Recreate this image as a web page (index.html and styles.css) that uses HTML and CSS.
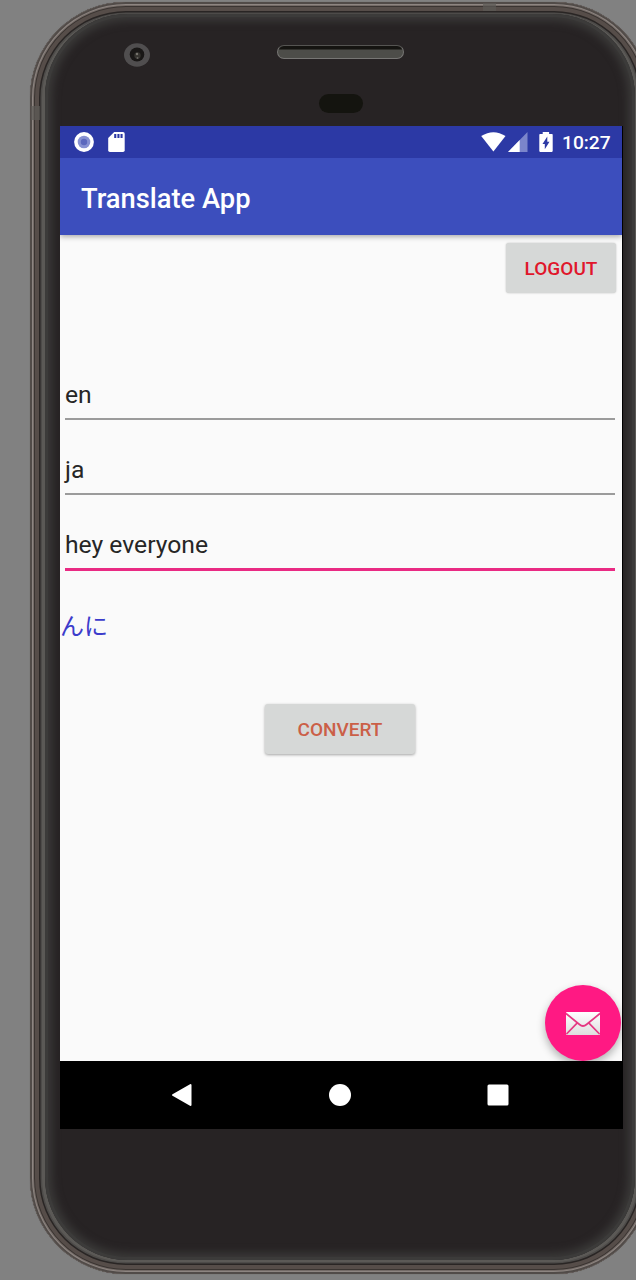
FILE: index.html
```html
<!DOCTYPE html>
<html lang="en">
<head>
<meta charset="utf-8">
<title>Translate App</title>
<link rel="stylesheet" href="styles.css">
</head>
<body>
<div class="phone">
  <i class="antenna antenna-side"></i>
  <i class="antenna antenna-top"></i>
  <div class="face">
    <div class="bezel">
      <svg class="camera" viewBox="0 0 26 24" width="26" height="24">
        <ellipse cx="13" cy="12" rx="13" ry="11.7" fill="#504e4f"/>
        <ellipse cx="13" cy="11.5" rx="7.3" ry="7" fill="#191716"/>
        <circle cx="13.5" cy="12.5" r="3.2" fill="#35332f"/>
        <circle cx="13" cy="11" r="1.2" fill="#77746e"/>
        <circle cx="13.5" cy="15" r="1" fill="#67645f"/>
      </svg>
      <div class="speaker"></div>
      <div class="sensor"></div>
    </div>
    <div class="screen">
      <header class="status">
        <svg width="20" height="20" viewBox="0 0 20 20"><circle cx="10" cy="10" r="9.9" fill="#fff"/><circle cx="10" cy="10" r="6.3" fill="#8791d2"/><circle cx="10" cy="10" r="3.2" fill="#5c68bd"/></svg>
        <svg class="sd" width="17" height="20" viewBox="0 0 17 20"><path fill="#fff" d="M6.2 0H15q1.7 0 1.7 1.8V18.200q0 1.700-1.700 1.700H1.900Q.2 19.900.2 18.200V6z"/><path fill="#2c39a5" d="M6.200 2h2.100v4H6.200zM9.400 2h2.100v4H9.400zM12.500 2h2.100v4h-2.100z"/></svg>
        <span class="spacer"></span>
        <svg class="wifi" width="25" height="20" viewBox="0 0 25 20"><path fill="#fff" d="M.2 4Q12.500-3.600 24.500 4L12.400 19.500z"/></svg>
        <svg class="signal" width="20" height="20" viewBox="0 0 20 20"><path fill="#7b85cb" d="M19.500 0v20H0z"/><path fill="#fff" d="M11.700 8v12H0z"/></svg>
        <svg class="battery" width="14" height="20" viewBox="0 0 14 20"><path fill="#fff" d="M3.700 0h6.400v2H13q.7 0 .7.800v16.300q0 .8-.8.800H1.100q-.8 0-.8-.8V2.800Q.3 2 1.100 2h2.600z"/><path fill="#2c39a5" d="M8.300 4.500v5.300h2.200L5.800 17.200v-5.300H3.500z"/></svg>
        <span class="clock">10:27</span>
      </header>
      <div class="appbar">Translate App</div>
      <main class="content">
        <div class="logout-row"><button class="btn logout">LOGOUT</button></div>
        <div class="field">en</div>
        <div class="field">ja</div>
        <div class="field active">hey everyone</div>
        <div class="result" lang="ja">んに</div>
        <div class="convert-row"><button class="btn convert">CONVERT</button></div>
        <div class="fab-row">
          <button class="fab" aria-label="Mail">
            <svg width="36" height="25" viewBox="0 0 36 25">
              <defs><linearGradient id="paper" x2="0" y2="1"><stop offset="0" stop-color="#fff"/><stop offset="1" stop-color="#dedede"/></linearGradient></defs>
              <rect x="1" y="1" width="34" height="23" rx="1" fill="url(#paper)"/>
              <path d="M1 2.500 14.500 13.500Q18 16.500 21.500 13.500L35 2.500M1.500 23 12.300 11.800M34.500 23 23.700 11.800" fill="none" stroke="#e53882" stroke-width="1.700"/>
            </svg>
          </button>
        </div>
      </main>
      <nav class="navbar">
        <svg width="22" height="24" viewBox="0 0 22 24"><path fill="#fff" stroke="#fff" stroke-width="2" stroke-linejoin="round" d="M2 12 19.500 2v20z"/></svg>
        <svg width="24" height="24" viewBox="0 0 24 24"><circle cx="12" cy="12" r="11" fill="#fff"/></svg>
        <svg width="22" height="22" viewBox="0 0 22 22"><rect x=".5" y=".5" width="21" height="21" rx="1.500" fill="#fff"/></svg>
      </nav>
    </div>
  </div>
</div>
</body>
</html>
```
FILE: styles.css
```css
* { box-sizing: border-box; }
body {
  margin: 0;
  height: 1280px;
  padding: 2px 0 0 30px;
  overflow: hidden;
  background: #818181;
  font-family: Roboto, "Noto Sans CJK JP", sans-serif;
}
.phone {
  position: relative;
  width: 620px;
  height: 1272px;
  padding: 12px 15px 14px;
  border-radius: 96px;
  background: #5b5956;
  box-shadow:
    0 0 1px #5e5956,
    inset 0 0 0 2px #514b48,
    inset 0 0 0 3px #8d8581,
    inset 0 0 0 4px #746b67,
    inset 0 0 0 5px #3a3431,
    inset 0 0 0 9px #564d49,
    inset 0 0 0 10.500px #292524,
    inset 0 0 0 12px #4d4b49;
}
.face {
  height: 1246px;
  border-radius: 83px;
  background: #272324;
  box-shadow: inset 0 0 0 3px #3c3b3a, inset 0 0 9px 7px #3b3a39;
}
.antenna { position: absolute; background: #5c5a57; opacity: .7; }
.antenna-side { left: 1px; top: 104px; width: 9px; height: 14px; }
.antenna-top { left: 453px; top: 1px; width: 13px; height: 8px; }
.bezel {
  height: 112px;
  display: grid;
  grid-template-columns: 79px 153px 44px 40px 1fr;
  grid-template-rows: 29px 24px 27px 19px;
}
.camera { grid-area: 2 / 2; }
.speaker {
  grid-area: 2 / 3 / 3 / 5;
  justify-self: start;
  width: 127px;
  height: 14px;
  margin-top: 2px;
  border: 1.500px solid #777674;
  border-top-color: #555452;
  border-radius: 7px;
  background: linear-gradient(#151411 0 3px, #4d4d49 4px);
}
.sensor { grid-area: 4 / 4; width: 44px; height: 19px; margin-left: -2px; border-radius: 10px; background: #14140f; }
.screen {
  width: 563px;
  height: 1003px;
  margin-left: 15px;
  display: flex;
  flex-direction: column;
  background: #000;
  overflow: hidden;
}
.status { position: relative; z-index: 1; height: 32px; width: 562px; display: flex; align-items: center; padding: 0 11px 0 14px; background: #2c39a5; color: #fff; flex: none; }
.sd { margin-left: 14px; }
.spacer { flex: 1; }
.signal { margin-left: 2px; }
.battery { margin-left: 11px; }
.clock { margin-left: 9px; width: 49px; font-size: 19.200px; font-weight: 500; white-space: nowrap; padding-top: 1px; }
.appbar {
  position: relative;
  width: 562px;
  height: 77px;
  padding: 4px 0 0 21px;
  display: flex;
  align-items: center;
  flex: none;
  background: #3c4ebd;
  color: #fff;
  font-size: 27.300px;
  font-weight: 500;
  box-shadow: 0 1px 6px rgba(0,0,0,.4);
}
.content { width: 562px; height: 826px; flex: none; background: #fafafa; display: flex; flex-direction: column; overflow: hidden; }
.btn {
  border: 0;
  padding: 0;
  height: 50px;
  border-radius: 3px;
  background: #d6d8d7;
  box-shadow: 0 1px 3px rgba(0,0,0,.35);
  font: 500 19px Roboto, sans-serif;
}
.logout-row { height: 134px; padding: 8px 6px 0; display: flex; justify-content: flex-end; align-items: flex-start; }
.logout { width: 110px; color: #e0162b; box-shadow: 0 0 2px rgba(0,0,0,.25); }
.convert { width: 150px; color: #cb5f47; }
.field {
  height: 51px;
  margin: 0 7px 24px 5px;
  border-bottom: 2px solid #9b9b9b;
  line-height: 51px;
  font-size: 24.700px;
  color: #262626;
}
.field.active { height: 52px; border-bottom: 3px solid #e92a83; margin-bottom: 36px; }
.result { height: 36px; line-height: 35px; padding-left: 0; font-size: 24px; font-weight: 400; color: #3c3ccb; font-family: "Noto Sans CJK JP", sans-serif; }
.convert-row { margin-top: 61px; padding-right: 2px; display: flex; justify-content: center; }
.fab-row { margin-top: auto; padding-right: 1px; display: flex; justify-content: flex-end; }
.fab {
  width: 76px;
  height: 76px;
  border: 0;
  padding: 0;
  border-radius: 50%;
  background: #ff1983;
  box-shadow: 0 4px 9px rgba(0,0,0,.3);
  display: grid;
  place-items: center;
}
.navbar { height: 68px; display: flex; align-items: center; justify-content: space-between; padding: 0 114px 1px 111px; }
```
